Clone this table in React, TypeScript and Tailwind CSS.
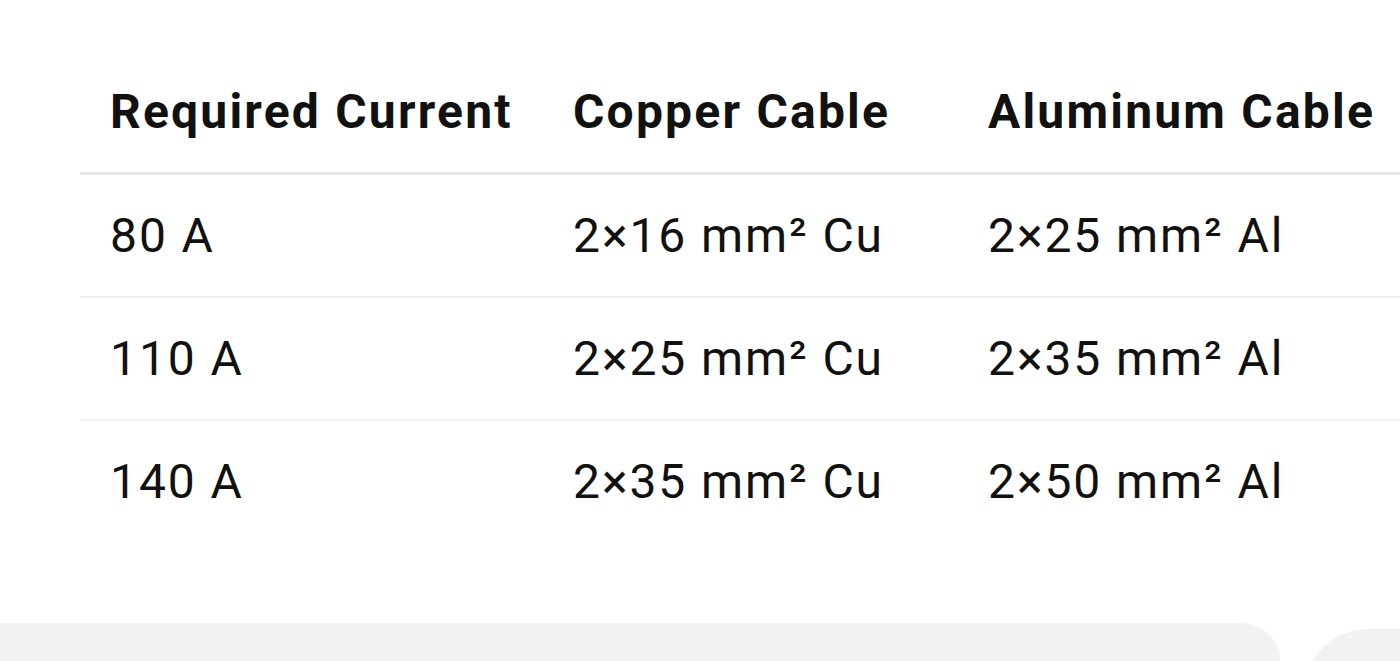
import React from "react";

const rows = [
  ["80 A", "2×16 mm² Cu", "2×25 mm² Al"],
  ["110 A", "2×25 mm² Cu", "2×35 mm² Al"],
  ["140 A", "2×35 mm² Cu", "2×50 mm² Al"],
];

export default function App() {
  return (
    <div
      className="relative h-[661px] w-[1400px] overflow-hidden bg-white text-[#111111]"
      style={{ fontFamily: "Roboto, 'Noto Sans', sans-serif" }}
    >
      <div className="pl-[80px] pt-[51px]">
        <table className="w-[1400px] table-fixed border-collapse text-[48px] leading-[57px] tracking-[0.04em]">
          <colgroup>
            <col className="w-[463px]" />
            <col className="w-[415px]" />
            <col />
          </colgroup>
          <thead>
            <tr className="border-b-[3px] border-[#e6e6e6]">
              <th className="px-[30px] py-[32px] text-left font-bold tracking-[0.046em]">Required Current</th>
              <th className="px-[30px] py-[32px] text-left font-bold tracking-[0.046em]">Copper Cable</th>
              <th className="px-[30px] py-[32px] text-left font-bold tracking-[0.046em]">Aluminum Cable</th>
            </tr>
          </thead>
          <tbody>
            {rows.map((r, i) => (
              <tr
                key={i}
                className={i < rows.length - 1 ? "border-b-2 border-[#f0f0f0]" : ""}
              >
                {r.map((c, j) => (
                  <td key={j} className="whitespace-nowrap px-[30px] py-[32px] font-normal">
                    {c}
                  </td>
                ))}
              </tr>
            ))}
          </tbody>
        </table>
      </div>
      <div className="absolute bottom-0 left-0 h-[38px] w-[1280px] rounded-tr-[70px] bg-[#f2f2f2]" />
      <div className="absolute left-[1304px] top-[629px] h-[100px] w-[200px] rounded-tl-[64px] bg-[#f2f2f2]" />
    </div>
  );
}
